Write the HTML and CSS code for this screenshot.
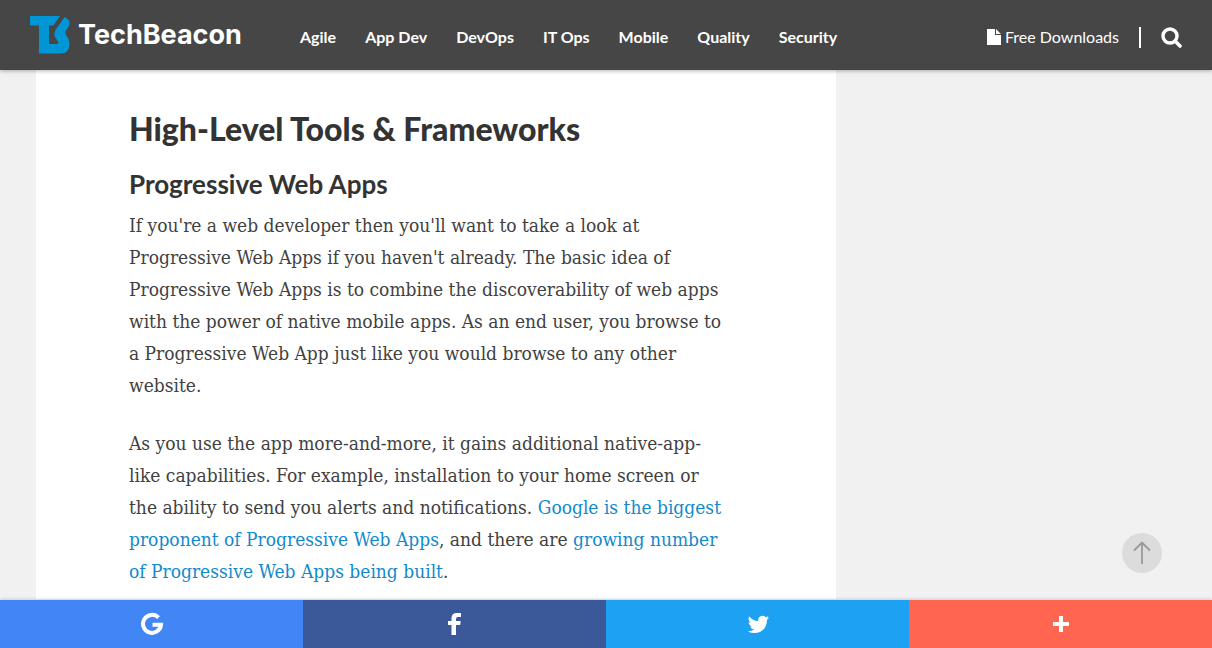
FILE: index.html
```html
<!DOCTYPE html>
<html lang="en">
<head>
<meta charset="utf-8">
<meta name="viewport" content="width=device-width, initial-scale=1">
<title>High-Level Tools &amp; Frameworks | TechBeacon</title>
<link rel="stylesheet" href="styles.css">
</head>
<body>
<header class="site-header">
  <a class="brand" href="#">
    <svg class="brand-mark" viewBox="0 0 40 38" aria-hidden="true">
      <path fill="#0096d6" d="M0 0H30L23.500 9.500H19V28H27.500L28.500 26.500L25 21Q23.500 17.500 25.500 14L34.500 1Q39.500 3 39.500 7.500Q39.500 10.500 37 13L35.500 15.500Q35 17.500 36.500 19.500Q39.500 23 39.500 27.500Q39.500 37.500 31 37.500H9V9.500H0Z"/>
    </svg>
    <span class="brand-name">TechBeacon</span>
  </a>
  <nav class="main-nav" aria-label="Main">
    <a href="#">Agile</a>
    <a href="#">App Dev</a>
    <a href="#">DevOps</a>
    <a href="#">IT Ops</a>
    <a href="#">Mobile</a>
    <a href="#">Quality</a>
    <a href="#">Security</a>
  </nav>
  <div class="tools">
    <a class="downloads" href="#">
      <svg class="file-icon" viewBox="0 0 14 16" aria-hidden="true"><path fill="#fff" d="M0 0H8V6H14V16H0ZM9 0L14 5H9Z"/></svg>
      Free Downloads
    </a>
    <span class="divider"></span>
    <button class="search" type="button" aria-label="Search">
      <svg viewBox="0 0 21 21" aria-hidden="true"><circle cx="9" cy="9" r="7" fill="none" stroke="#fff" stroke-width="3.400"/><path d="M14 14L19 19" stroke="#fff" stroke-width="3.600" stroke-linecap="round"/></svg>
    </button>
  </div>
</header>
<main class="page">
  <article class="article">
    <h2 class="section-title">High-Level Tools &amp; Frameworks</h2>
    <h3 class="topic-title">Progressive Web Apps</h3>
    <p>If you're a web developer then you'll want to take a look at<br>Progressive Web Apps if you haven't already. The basic idea of<br>Progressive Web Apps is to combine the discoverability of web apps<br>with the power of native mobile apps. As an end user, you browse to<br>a Progressive Web App just like you would browse to any other<br>website.</p>
    <p>As you use the app more-and-more, it gains additional native-app-<br>like capabilities. For example, installation to your home screen or<br>the ability to send you alerts and notifications. <a href="#">Google is the biggest<br>proponent of Progressive Web Apps</a>, and there are <a href="#">growing number<br>of Progressive Web Apps being built</a>.</p>
  </article>
</main>
<button class="to-top" type="button" aria-label="Back to top">
  <svg viewBox="0 0 18 24" aria-hidden="true"><path d="M9 23V2M1 9.500L9 1.500L17 9.500" fill="none" stroke="#999" stroke-width="1.800"/></svg>
</button>
<footer class="share">
  <a class="google" href="#" aria-label="Share on Google"><svg viewBox="0 0 24 24" aria-hidden="true"><path d="M18.500 5.600A9 9 0 1 0 21 12.700H12.500" fill="none" stroke="#fff" stroke-width="4"/></svg></a>
  <a class="facebook" href="#" aria-label="Share on Facebook"><svg viewBox="0 0 24 24" aria-hidden="true"><path fill="#fff" d="M8.500 23V13H5V9H8.500V6.300Q8.500 1 14 1H18V5H15Q13 5 13 7V9H17.700L17.200 13H13V23Z"/></svg></a>
  <a class="twitter" href="#" aria-label="Share on Twitter"><svg viewBox="-2 -2 27 27" aria-hidden="true"><path fill="#fff" d="M23.950 4.570a10 10 0 0 1-2.820.770 4.960 4.960 0 0 0 2.160-2.720c-.950.550-2 .960-3.130 1.180a4.920 4.920 0 0 0-8.380 4.480C7.690 8.100 4.070 6.130 1.640 3.160a4.920 4.920 0 0 0 1.520 6.570 4.900 4.900 0 0 1-2.230-.610v.060a4.920 4.920 0 0 0 3.950 4.830 5 5 0 0 1-2.210.080 4.940 4.940 0 0 0 4.600 3.420A9.870 9.870 0 0 1 0 19.540a13.990 13.990 0 0 0 7.550 2.210c9.050 0 14-7.500 14-13.980l-.020-.640a9.940 9.940 0 0 0 2.420-2.560z"/></svg></a>
  <a class="more" href="#" aria-label="More sharing options"><svg viewBox="0 0 24 24" aria-hidden="true"><path fill="#fff" d="M10 4H14V10H20V14H14V20H10V14H4V10H10Z"/></svg></a>
</footer>
</body>
</html>
```
FILE: styles.css
```css
* { box-sizing: border-box; }
body {
  margin: 0;
  min-height: 100vh;
  display: flex;
  flex-direction: column;
  background: #f1f1f1;
  color: #414141;
  font-family: Lato, sans-serif;
}
a { color: inherit; text-decoration: none; }
button { padding: 0; border: 0; background: none; cursor: pointer; }
svg { display: block; }

.site-header {
  position: sticky;
  top: 0;
  z-index: 2;
  height: 70px;
  display: flex;
  align-items: center;
  padding: 0 30px;
  background: #464646;
  color: #fff;
  box-shadow: 0 1px 4px rgba(0, 0, 0, .3);
}
.brand { display: flex; align-items: center; gap: 8px; width: 270px; }
.brand-mark { width: 40px; height: 38px; }
.brand-name { font: 700 27px/38px Inter, sans-serif; }
.main-nav { display: flex; gap: 29px; padding-top: 4px; font-size: 16px; font-weight: 700; line-height: 20px; white-space: nowrap; }
.tools { display: flex; align-items: center; gap: 20px; margin-left: auto; padding-top: 4px; }
.downloads { display: flex; align-items: center; gap: 4px; font-size: 16px; line-height: 20px; white-space: nowrap; }
.file-icon { width: 14px; height: 16px; }
.divider { width: 2px; height: 21px; background: #fff; }
.search svg { width: 21px; height: 21px; }

.page { flex: 1; padding: 0 36px; }
.article {
  max-width: 800px;
  height: 100%;
  padding: 39px 93px 12px;
  background: #fff;
  white-space: nowrap;
}
.section-title { margin: 0 0 17px; color: #333; font-size: 32px; font-weight: 900; line-height: 40px; }
.topic-title { margin: 0 0 7px; color: #333; font-size: 26px; font-weight: 700; line-height: 36px; }
.article p { margin: 0 0 26px; font: 19px/32px "DejaVu Serif Condensed", "DejaVu Serif", serif; }
.article p:last-child { margin: 0; }
.article p a { color: #118acb; }

.to-top {
  position: fixed;
  right: 50px;
  bottom: 75px;
  width: 40px;
  height: 40px;
  display: grid;
  place-items: center;
  border-radius: 50%;
  background: #dcdcdc;
}
.to-top svg { width: 18px; height: 24px; }

.share {
  position: sticky;
  bottom: 0;
  display: grid;
  grid-template-columns: repeat(4, 1fr);
  height: 48px;
  box-shadow: 0 -1px 3px rgba(0, 0, 0, .15);
}
.share a { display: grid; place-items: center; }
.share svg { width: 24px; height: 24px; }
.google { background: #4285f4; }
.facebook { background: #3b5998; }
.twitter { background: #1da1f2; }
.more { background: #ff6550; }
```
